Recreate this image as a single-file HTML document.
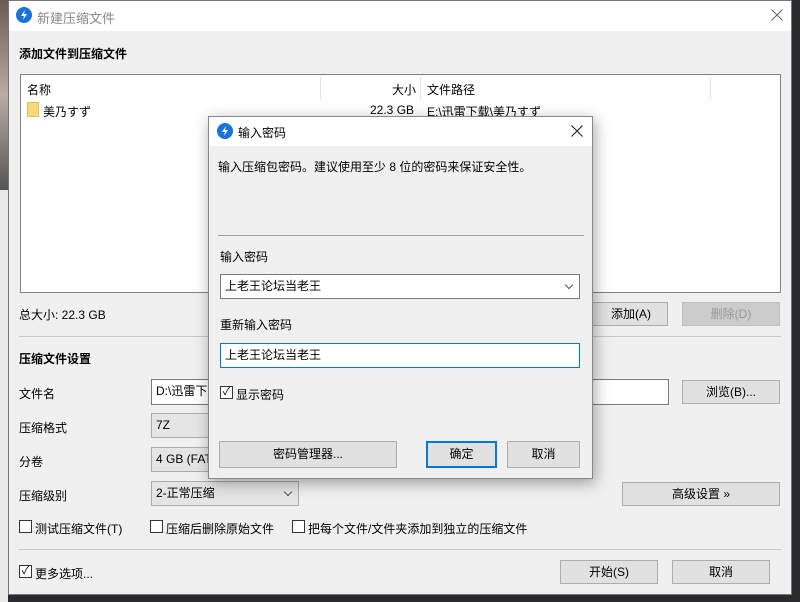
<!DOCTYPE html><html><head><meta charset="utf-8"><style>
*{box-sizing:border-box;margin:0;padding:0}
body{width:800px;height:602px;position:relative;overflow:hidden;background:#2a2a2e;font-family:"Liberation Sans","Noto Sans CJK SC",sans-serif;font-size:12px;color:#000}
.a{position:absolute}
.btn{position:absolute;background:#e1e1e1;border:1px solid #adadad;text-align:center;line-height:22px}
.inp{position:absolute;background:#fff;border:1px solid #7a7a7a;padding-left:4px;line-height:22px}
.sel{position:absolute;background:#e5e5e5;border:1px solid #adadad;padding-left:4px;line-height:22px}
.cb{position:absolute;width:13px;height:13px;border:1px solid #333;background:#fff}
.hr{position:absolute;height:1px;background:#c8c8c8}
.chev{position:absolute;width:6px;height:6px;border-right:1px solid #555;border-bottom:1px solid #555;transform:rotate(45deg)}
</style></head><body>
<div class="a" style="left:0;top:0;width:8px;height:190px;background:linear-gradient(#6b5a52,#b8aca4,#555)"></div>
<div class="a" style="left:0;top:190px;width:8px;height:412px;background:#e8e8e8"></div>
<div class="a" style="left:8px;top:0;width:784px;height:595px;background:#f0f0f0;border:1px solid #777"></div>
<div class="a" style="left:9px;top:1px;width:782px;height:30px;background:#fff"></div>
<svg class="a" style="left:16px;top:7px" width="16" height="16"><circle cx="8" cy="8" r="8" fill="#1a73d9"/><path d="M9 3L5 9h3l-1 4 4-6H8z" fill="#fff"/></svg>
<div class="a" style="left:37px;top:8px;color:#888;font-size:13px">新建压缩文件</div>
<svg class="a" style="left:771px;top:9px" width="12" height="12"><path d="M0.5 0.5L11.5 11.5M11.5 0.5L0.5 11.5" stroke="#666" stroke-width="1"/></svg>
<div class="a" style="left:19px;top:45px;font-weight:bold">添加文件到压缩文件</div>
<div class="a" style="left:20px;top:74px;width:761px;height:219px;background:#fff;border:1px solid #828282"></div>
<div class="a" style="left:320px;top:76px;width:1px;height:24px;background:#e5e5e5"></div>
<div class="a" style="left:420px;top:76px;width:1px;height:24px;background:#e5e5e5"></div>
<div class="a" style="left:710px;top:76px;width:1px;height:24px;background:#e5e5e5"></div>
<div class="a" style="left:27px;top:81px">名称</div>
<div class="a" style="left:392px;top:81px">大小</div>
<div class="a" style="left:427px;top:81px">文件路径</div>
<div class="a" style="left:27px;top:102px;width:12px;height:15px;background:#f8d97a;border:1px solid #e0c060"></div>
<div class="a" style="left:43px;top:103px">美乃すず</div>
<div class="a" style="left:370px;top:103px">22.3 GB</div>
<div class="a" style="left:427px;top:103px">E:\迅雷下载\美乃すず</div>
<div class="a" style="left:19px;top:306px">总大小: 22.3 GB</div>
<div class="btn" style="left:580px;top:302px;width:88px;height:24px;padding-left:14px">添加(A)</div>
<div class="btn" style="left:682px;top:302px;width:98px;height:24px;color:#999;background:#ccc;border-color:#bfbfbf">删除(D)</div>
<div class="hr" style="left:19px;top:336px;width:762px"></div>
<div class="a" style="left:19px;top:350px;font-weight:bold">压缩文件设置</div>
<div class="a" style="left:19px;top:385px">文件名</div>
<div class="inp" style="left:151px;top:379px;width:518px;height:26px">D:\迅雷下</div>
<div class="btn" style="left:682px;top:380px;width:98px;height:24px">浏览(B)...</div>
<div class="a" style="left:19px;top:419px">压缩格式</div>
<div class="sel" style="left:151px;top:413px;width:150px;height:25px">7Z</div>
<div class="a" style="left:19px;top:453px">分卷</div>
<div class="sel" style="left:151px;top:447px;width:150px;height:25px">4 GB (FAT</div>
<div class="a" style="left:19px;top:487px">压缩级别</div>
<div class="sel" style="left:151px;top:481px;width:148px;height:25px">2-正常压缩</div>
<div class="chev" style="left:285px;top:489px"></div>
<div class="btn" style="left:622px;top:482px;width:158px;height:24px">高级设置 »</div>
<div class="cb" style="left:19px;top:520px"></div><div class="a" style="left:35px;top:520px">测试压缩文件(T)</div>
<div class="cb" style="left:150px;top:520px"></div><div class="a" style="left:166px;top:520px">压缩后删除原始文件</div>
<div class="cb" style="left:292px;top:520px"></div><div class="a" style="left:308px;top:520px">把每个文件/文件夹添加到独立的压缩文件</div>
<div class="hr" style="left:19px;top:549px;width:762px"></div>
<div class="cb" style="left:19px;top:565px;font-size:11px;line-height:11px;text-align:center">✓</div><div class="a" style="left:35px;top:565px">更多选项...</div>
<div class="btn" style="left:560px;top:560px;width:98px;height:24px">开始(S)</div>
<div class="btn" style="left:672px;top:560px;width:98px;height:24px">取消</div>
<div class="a" style="left:208px;top:116px;width:385px;height:363px;background:#f0f0f0;border:1px solid #888;box-shadow:2px 4px 14px rgba(0,0,0,.35)"></div>
<div class="a" style="left:209px;top:117px;width:383px;height:29px;background:#fff"></div>
<svg class="a" style="left:217px;top:123px" width="16" height="16"><circle cx="8" cy="8" r="8" fill="#1a73d9"/><path d="M9 3L5 9h3l-1 4 4-6H8z" fill="#fff"/></svg>
<div class="a" style="left:238px;top:124px">输入密码</div>
<svg class="a" style="left:571px;top:125px" width="12" height="12"><path d="M0.5 0.5L11.5 11.5M11.5 0.5L0.5 11.5" stroke="#222" stroke-width="1.1"/></svg>
<div class="a" style="left:218px;top:158px">输入压缩包密码。建议使用至少 8 位的密码来保证安全性。</div>
<div class="hr" style="left:218px;top:235px;width:366px;background:#a0a0a0"></div>
<div class="a" style="left:220px;top:248px">输入密码</div>
<div class="inp" style="left:220px;top:274px;width:360px;height:25px">上老王论坛当老王</div>
<div class="chev" style="left:566px;top:282px"></div>
<div class="a" style="left:220px;top:316px">重新输入密码</div>
<div class="inp" style="left:220px;top:343px;width:360px;height:25px;border-color:#0078d7">上老王论坛当老王</div>
<div class="cb" style="left:220px;top:386px;font-size:11px;line-height:11px;text-align:center">✓</div><div class="a" style="left:236px;top:386px">显示密码</div>
<div class="btn" style="left:219px;top:441px;width:178px;height:27px;line-height:25px">密码管理器...</div>
<div class="btn" style="left:426px;top:441px;width:71px;height:27px;line-height:23px;border:2px solid #0078d7">确定</div>
<div class="btn" style="left:507px;top:441px;width:73px;height:27px;line-height:25px">取消</div>
</body></html>
